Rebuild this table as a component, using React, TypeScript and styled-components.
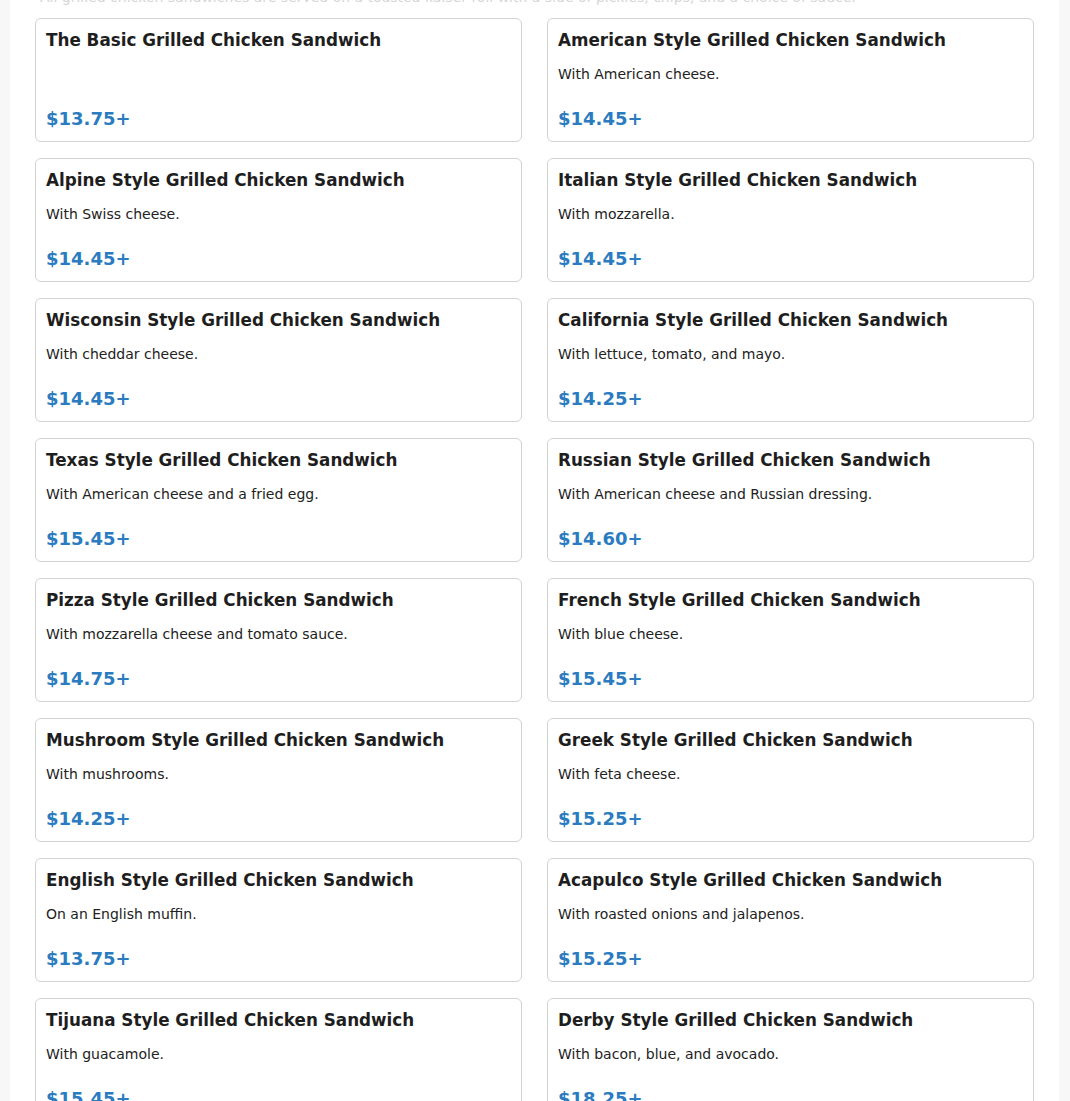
import {FC} from "react";
import styled, {createGlobalStyle} from "styled-components";

type Item = {
    name: string;
    desc: string;
    price: string;
};

const items: Item[] = [
    {name: "The Basic Grilled Chicken Sandwich", desc: "", price: "$13.75+"},
    {name: "American Style Grilled Chicken Sandwich", desc: "With American cheese.", price: "$14.45+"},
    {name: "Alpine Style Grilled Chicken Sandwich", desc: "With Swiss cheese.", price: "$14.45+"},
    {name: "Italian Style Grilled Chicken Sandwich", desc: "With mozzarella.", price: "$14.45+"},
    {name: "Wisconsin Style Grilled Chicken Sandwich", desc: "With cheddar cheese.", price: "$14.45+"},
    {name: "California Style Grilled Chicken Sandwich", desc: "With lettuce, tomato, and mayo.", price: "$14.25+"},
    {name: "Texas Style Grilled Chicken Sandwich", desc: "With American cheese and a fried egg.", price: "$15.45+"},
    {name: "Russian Style Grilled Chicken Sandwich", desc: "With American cheese and Russian dressing.", price: "$14.60+"},
    {name: "Pizza Style Grilled Chicken Sandwich", desc: "With mozzarella cheese and tomato sauce.", price: "$14.75+"},
    {name: "French Style Grilled Chicken Sandwich", desc: "With blue cheese.", price: "$15.45+"},
    {name: "Mushroom Style Grilled Chicken Sandwich", desc: "With mushrooms.", price: "$14.25+"},
    {name: "Greek Style Grilled Chicken Sandwich", desc: "With feta cheese.", price: "$15.25+"},
    {name: "English Style Grilled Chicken Sandwich", desc: "On an English muffin.", price: "$13.75+"},
    {name: "Acapulco Style Grilled Chicken Sandwich", desc: "With roasted onions and jalapenos.", price: "$15.25+"},
    {name: "Tijuana Style Grilled Chicken Sandwich", desc: "With guacamole.", price: "$15.45+"},
    {name: "Derby Style Grilled Chicken Sandwich", desc: "With bacon, blue, and avocado.", price: "$18.25+"},
];

const MenuCard: FC<{item: Item}> = ({item}) => (
    <Card>
        <Title>{item.name}</Title>
        <Desc>{item.desc}</Desc>
        <Price>{item.price}</Price>
    </Card>
);

export default function App() {
    return (
        <>
            <GlobalStyle />
            <Panel>
                <Intro>
                    All grilled chicken sandwiches are served on a toasted kaiser roll with a side of pickles, chips, and a choice of sauce.
                </Intro>
                <Grid>
                    {items.map((item) => (
                        <MenuCard key={item.name} item={item} />
                    ))}
                </Grid>
            </Panel>
        </>
    );
}

const GlobalStyle = createGlobalStyle`
    html, body {
        margin: 0;
        padding: 0;
        background: #f7f7f7;
        font-family: "DejaVu Sans", "Liberation Sans", sans-serif;
        overflow: hidden;
    }
`;

const Panel = styled.div`
    background: #ffffff;
    margin: -13px 11px 0 10px;
    padding: 0 25px 40px;
    min-height: 1200px;
`;

const Intro = styled.p`
    margin: 0 5px 11px;
    font-size: 14px;
    line-height: 20px;
    color: #d6d6d6;
    white-space: nowrap;
    overflow: hidden;
`;

const Grid = styled.div`
    display: grid;
    grid-template-columns: 1fr 1fr;
    column-gap: 25px;
    row-gap: 16px;
`;

const Card = styled.div`
    display: flex;
    flex-direction: column;
    border: 1px solid #d2d2d2;
    border-radius: 6px;
    padding: 11px 10px 9px;
    background: #ffffff;
`;

const Title = styled.h3`
    margin: 0;
    font-size: 16.8px;
    line-height: 21px;
    font-weight: bold;
    color: #1e1e1e;
`;

const Desc = styled.p`
    margin: 13px 0 0;
    min-height: 21px;
    font-size: 14px;
    line-height: 21px;
    color: #222222;
`;

const Price = styled.div`
    margin-top: 21px;
    font-size: 18px;
    line-height: 26px;
    font-weight: bold;
    color: #2b7bc0;
`;
